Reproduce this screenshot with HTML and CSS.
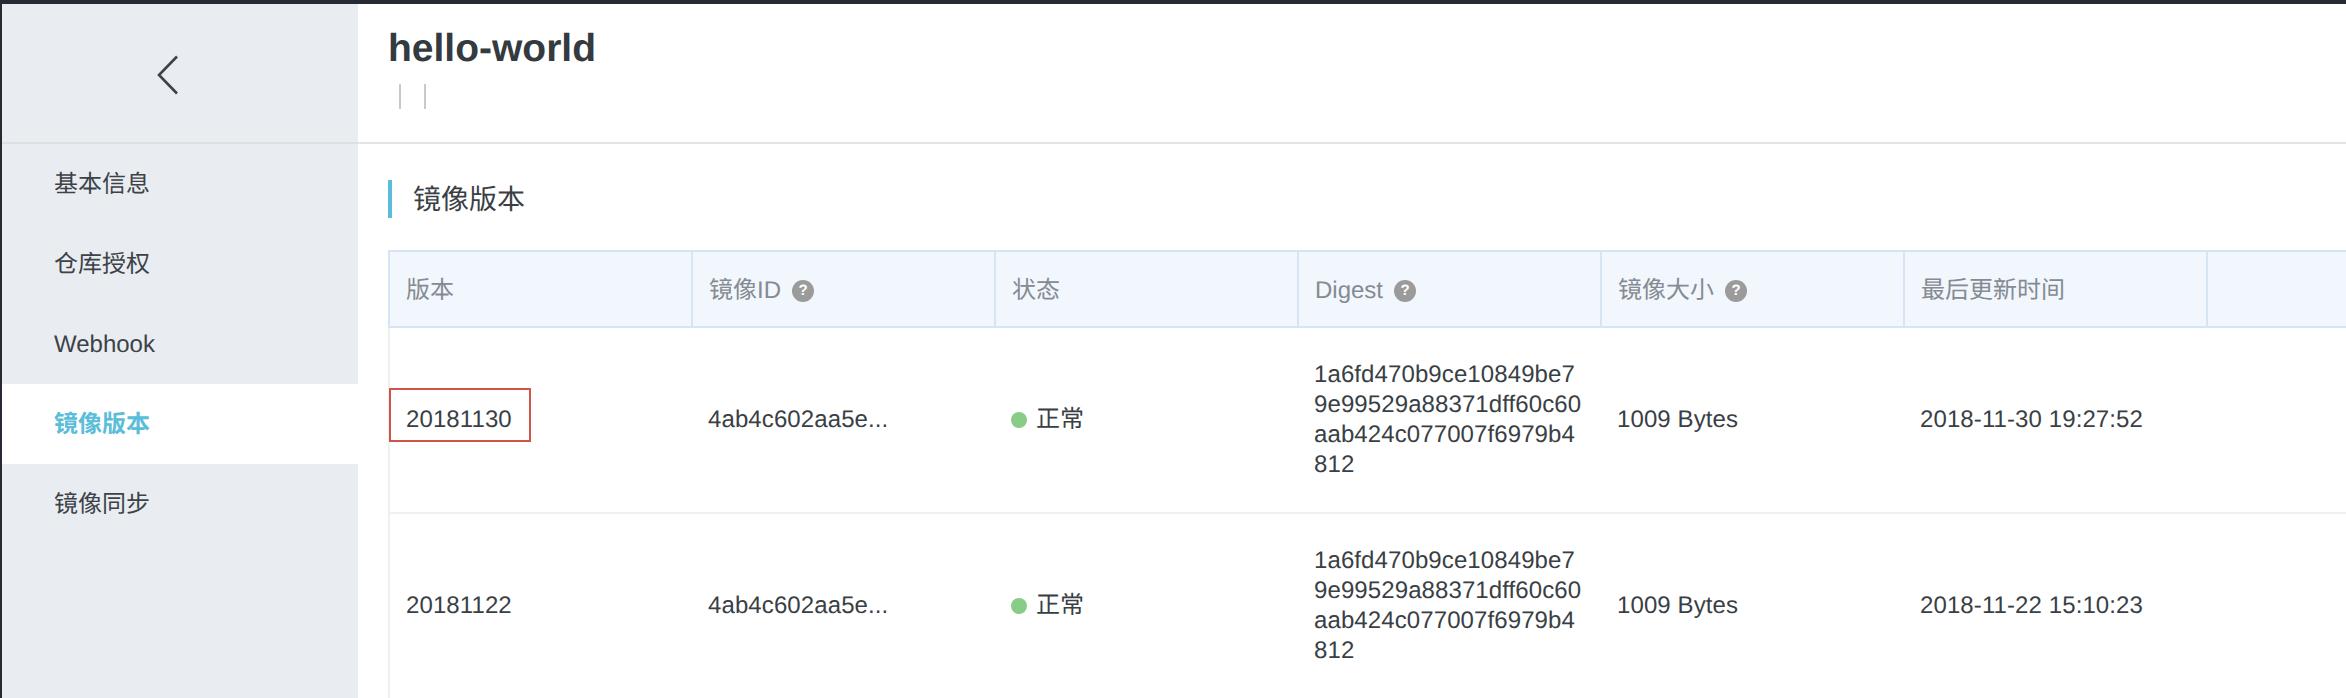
FILE: index.html
```html
<!DOCTYPE html>
<html>
<head>
  <meta charset="utf-8">
  <link rel="stylesheet" href="styles.css">
  <title>hello-world</title>
</head>
<body>
  <div class="layout">
    <aside class="side">
      <div class="side-head">
        <svg class="back" width="22" height="40" viewBox="0 0 22 40"><path d="M20 1.5 2 20l18 18.5" fill="none" stroke="#3c4248" stroke-width="2.6"/></svg>
      </div>
      <ul class="side-nav">
        <li>基本信息</li>
        <li>仓库授权</li>
        <li>Webhook</li>
        <li class="active">镜像版本</li>
        <li>镜像同步</li>
      </ul>
    </aside>
    <main class="content">
      <header class="head">
        <h1>hello-world</h1>
        <div class="meta"><i></i><i></i></div>
      </header>
      <section class="body">
        <h2 class="title">镜像版本</h2>
        <table class="grid">
          <colgroup>
            <col class="c-first"><col class="c"><col class="c"><col class="c"><col class="c"><col class="c"><col class="c">
          </colgroup>
          <thead>
            <tr>
              <th>版本</th>
              <th>镜像ID<span class="help">?</span></th>
              <th>状态</th>
              <th>Digest<span class="help">?</span></th>
              <th>镜像大小<span class="help">?</span></th>
              <th>最后更新时间</th>
              <th></th>
            </tr>
          </thead>
          <tbody>
            <tr>
              <td><span class="mark">20181130</span></td>
              <td>4ab4c602aa5e...</td>
              <td><span class="dot"></span>正常</td>
              <td class="digest">1a6fd470b9ce10849be79e99529a88371dff60c60aab424c077007f6979b4812</td>
              <td>1009 Bytes</td>
              <td>2018-11-30 19:27:52</td>
              <td></td>
            </tr>
            <tr>
              <td>20181122</td>
              <td>4ab4c602aa5e...</td>
              <td><span class="dot"></span>正常</td>
              <td class="digest">1a6fd470b9ce10849be79e99529a88371dff60c60aab424c077007f6979b4812</td>
              <td>1009 Bytes</td>
              <td>2018-11-22 15:10:23</td>
              <td></td>
            </tr>
          </tbody>
        </table>
      </section>
    </main>
  </div>
</body>
</html>
```

FILE: styles.css
```css
html, body {
  margin: 0;
  height: 100%;
  overflow: hidden;
}

body {
  background: #fff;
  color: #3a3f45;
  font-family: "Liberation Sans", "Noto Sans CJK SC", sans-serif;
  font-size: 24px;
  text-rendering: geometricPrecision;
  border-top: 4px solid #262b33;
  border-left: 2px solid #262b33;
  box-sizing: border-box;
}

.layout {
  display: flex;
  height: 100%;
}

/* sidebar */
.side {
  flex: 0 0 356px;
  background: #e9edf1;
}
.side-head {
  display: flex;
  align-items: center;
  height: 138px;
  padding-left: 155px;
  border-bottom: 2px solid #dedfe1;
}
.back {
  margin-top: 4px;
}
.side-nav {
  list-style: none;
  margin: 0;
  padding: 0;
}
.side-nav li {
  height: 80px;
  line-height: 82px;
  padding-left: 52px;
  color: #3c4248;
}
.side-nav li.active {
  background: #fff;
  color: #5bbdd9;
  font-weight: bold;
}

/* main */
.content {
  flex: 1;
  min-width: 0;
}
.head {
  height: 138px;
  padding-left: 30px;
  border-bottom: 2px solid #e4e4e4;
}
.head h1 {
  margin: 0;
  padding-top: 23px;
  font-size: 39px;
  line-height: 44px;
  font-weight: bold;
  color: #333a40;
}
.meta {
  display: flex;
  gap: 23px;
  margin-top: 13px;
  padding-left: 11px;
}
.meta i {
  width: 2px;
  height: 25px;
  background: #c9c9c9;
}

.body {
  padding-left: 30px;
}
.title {
  height: 38px;
  margin: 36px 0 32px;
  padding-left: 21px;
  border-left: 4px solid #5bbdd9;
  font-size: 28px;
  font-weight: normal;
  line-height: 40px;
  color: #3a3f45;
}

/* table */
.grid {
  table-layout: fixed;
  width: 2122px;
  border-collapse: separate;
  border-spacing: 0;
}
.c-first {
  width: 305px;
}
.c {
  width: 303px;
}
.grid th {
  height: 70px;
  padding: 4px 16px 0;
  background: #f2f7fd;
  border-top: 2px solid #d6e5f6;
  border-bottom: 2px solid #d6e5f6;
  border-right: 2px solid #d6e5f6;
  font-weight: normal;
  line-height: 30px;
  text-align: left;
  color: #858b92;
  white-space: nowrap;
  box-sizing: content-box;
}
.grid th:first-child {
  border-left: 2px solid #d6e5f6;
}
.grid td {
  height: 184px;
  padding: 0 16px 0 15px;
  border-bottom: 2px solid #f0f0f0;
  line-height: 30px;
  letter-spacing: 0.1px;
  color: #3a3f45;
}
.grid td:first-child {
  padding-left: 16px;
  border-left: 2px solid #f0f0f0;
}
.digest {
  word-break: break-all;
}

.help {
  display: inline-block;
  width: 22px;
  height: 22px;
  margin-left: 11px;
  border-radius: 50%;
  background: #9b9b9b;
  color: #fff;
  font-size: 15px;
  font-weight: bold;
  line-height: 22px;
  text-align: center;
  vertical-align: 3px;
}
.dot {
  display: inline-block;
  width: 16px;
  height: 16px;
  margin-right: 9px;
  border-radius: 50%;
  background: #88cc88;
  vertical-align: -1px;
}

/* red highlight drawn round the first version */
.mark {
  position: relative;
}
.mark::after {
  content: "";
  position: absolute;
  left: -17px;
  top: -18px;
  width: 142px;
  height: 54px;
  box-sizing: border-box;
  border: 2px solid #cf5548;
}
```
